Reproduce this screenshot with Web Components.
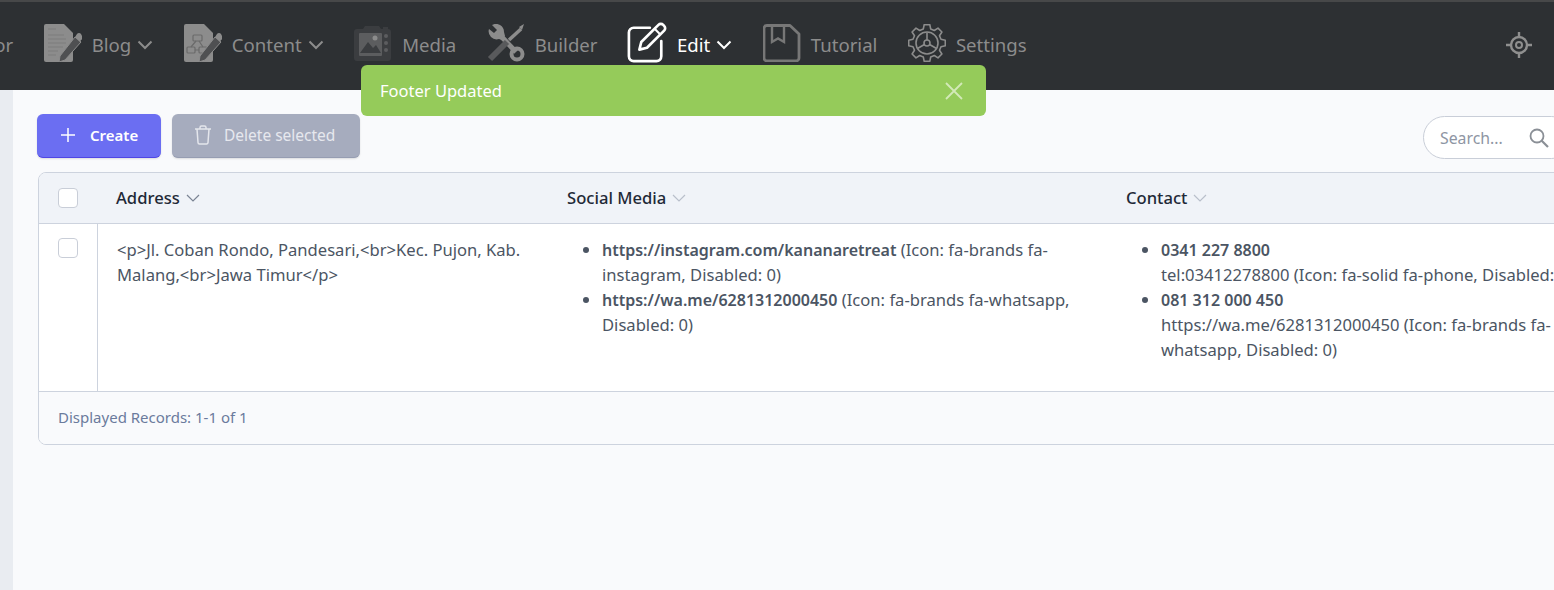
<!DOCTYPE html>
<html>
<head>
<meta charset="utf-8">
<title>Footer</title>
<style>
  html, body { margin: 0; height: 100%; overflow: hidden; background: #f9fafc; }
  body { font-family: "Noto Sans", "Open Sans", sans-serif; }
</style>
</head>
<body>

<app-shell>
  <nav-bar slot="nav">
    <nav-item label="Editor" clipped></nav-item>
    <nav-item label="Blog" caret>
      <svg slot="icon" width="38" height="38" viewBox="0 0 38 38">
        <path d="M2 0H20L29 9V36a2 2 0 0 1-2 2H2a2 2 0 0 1-2-2V2a2 2 0 0 1 2-2Z" fill="#8c8c8c"/>
        <path d="M4 5h8M4 11h16M4 15h18M4 19h18M4 23h15M4 27h10M4 31h8" stroke="#7c7c7c" stroke-width="1.2"/>
        <path d="M16 32L31 13l6 5L21 36l-6 2Z" fill="#4f5052" stroke="#8c8c8c" stroke-width="1"/>
        <path d="M31 13l2-3a2.500 2.500 0 0 1 4 0l1 2a3 3 0 0 1-1 4l-1 2Z" fill="#8c8c8c"/>
      </svg>
    </nav-item>
    <nav-item label="Content" caret>
      <svg slot="icon" width="38" height="38" viewBox="0 0 38 38">
        <path d="M2 0H20L29 9V36a2 2 0 0 1-2 2H2a2 2 0 0 1-2-2V2a2 2 0 0 1 2-2Z" fill="#8c8c8c"/>
        <g fill="none" stroke="#6a6a6a" stroke-width="1.200">
          <rect x="9" y="11" width="9" height="6" rx="1"/><rect x="3" y="23" width="8" height="6" rx="1"/><rect x="15" y="23" width="8" height="6" rx="1"/>
          <path d="M12 17l-5 6M15 17l4 6M11 26h4"/>
        </g>
        <path d="M16 32L31 13l6 5L21 36l-6 2Z" fill="#4f5052" stroke="#8c8c8c" stroke-width="1"/>
        <path d="M31 13l2-3a2.500 2.500 0 0 1 4 0l1 2a3 3 0 0 1-1 4l-1 2Z" fill="#8c8c8c"/>
      </svg>
    </nav-item>
    <nav-item label="Media">
      <svg slot="icon" width="38" height="38" viewBox="0 0 38 38">
        <path d="M3 5H9l2-3h14l2 3h2V3h5v2a3 3 0 0 1 3 3V34a3 3 0 0 1-3 3H3a3 3 0 0 1-3-3V8a3 3 0 0 1 3-3Z" fill="#3b3d40"/>
        <rect x="5" y="9" width="23" height="23" rx="1" fill="#5c5d5f"/>
        <path d="M6 29L14 18l5 6 3-3 5 8Z" fill="#3b3d40"/>
        <circle cx="21" cy="14" r="2.500" fill="#8c8c8c"/>
        <circle cx="32" cy="12" r="2" fill="#5c5d5f"/><circle cx="32" cy="19" r="2" fill="#5c5d5f"/><circle cx="32" cy="26" r="2" fill="#5c5d5f"/>
      </svg>
    </nav-item>
    <nav-item label="Builder">
      <svg slot="icon" width="38" height="38" viewBox="0 0 38 38">
        <path d="M12 10L29 28" stroke="#8c8c8c" stroke-width="5"/>
        <path d="M5 1l5 5-3 3-5-4a8 8 0 0 0 10 10l3 1 3-4-1-4A8 8 0 0 0 5 1Z" fill="#8c8c8c"/>
        <circle cx="30" cy="30" r="5.500" fill="none" stroke="#8c8c8c" stroke-width="4"/>
        <path d="M22 16L34 5" stroke="#8c8c8c" stroke-width="3.500"/>
        <path d="M32 3l5-3-2 6Z" fill="#8c8c8c"/>
        <path d="M3 35L20 18" stroke="#595a5c" stroke-width="6"/>
      </svg>
    </nav-item>
    <nav-item label="Edit" caret active>
      <svg slot="icon" width="40" height="42" viewBox="0 0 42 44">
        <path d="M24 6H7a5 5 0 0 0-5 5V36a5 5 0 0 0 5 5H31a5 5 0 0 0 5-5V20" fill="none" stroke="#fff" stroke-width="2.800" stroke-linecap="round"/>
        <path d="M13 29l2-8L33 3a3.500 3.500 0 0 1 5 0l1 1a3.500 3.500 0 0 1 0 5L21 27Z" fill="none" stroke="#fff" stroke-width="2.800" stroke-linejoin="round"/>
        <path d="M29 7l6 6" stroke="#fff" stroke-width="2.200"/>
      </svg>
    </nav-item>
    <nav-item label="Tutorial">
      <svg slot="icon" width="38" height="38" viewBox="0 0 38 38">
        <path d="M4 1.500H27L36 10V34a3 3 0 0 1-3 3H4a3 3 0 0 1-3-3V4a3 3 0 0 1 3-2.500Z" fill="none" stroke="#777" stroke-width="2.800" stroke-linejoin="round"/>
        <path d="M9 2V18l6-3.500L21 18V2" fill="none" stroke="#777" stroke-width="2.400"/>
      </svg>
    </nav-item>
    <nav-item label="Settings">
      <gear-icon slot="icon"></gear-icon>
    </nav-item>
    <svg class="target" slot="end" width="26" height="26" viewBox="0 0 26 26" fill="none" stroke="#8f8f8f">
      <circle cx="13" cy="13" r="8" stroke-width="2.400"/>
      <circle cx="13" cy="13" r="3" stroke-width="2"/>
      <path d="M13 0v5M13 21v5M0 13h5M21 13h5" stroke-width="2.400"/>
    </svg>
  </nav-bar>

  <toolbar-row>
    <ui-button variant="primary">
      <svg slot="icon" width="16" height="16" viewBox="0 0 16 16"><path d="M8 1v14M1 8h14" stroke="#fff" stroke-width="1.500"/></svg>
      Create
    </ui-button>
    <ui-button variant="muted">
      <svg slot="icon" width="18" height="20" viewBox="0 0 18 20" fill="none" stroke="#e4e6ec" stroke-width="1.500"><path d="M1 4h16M6 4V2.500A1.500 1.500 0 0 1 7.500 1h3A1.500 1.500 0 0 1 12 2.500V4M3 4l1 13.500A1.500 1.500 0 0 0 5.500 19h7a1.500 1.500 0 0 0 1.500-1.500L15 4"/></svg>
      Delete selected
    </ui-button>
    <search-box slot="end"></search-box>
  </toolbar-row>

  <data-table>
    <head-cell first><ui-check></ui-check></head-cell>
    <head-cell sort="#7b8494" tight>Address</head-cell>
    <head-cell sort="#b9bfcb">Social Media</head-cell>
    <head-cell sort="#b9bfcb">Contact</head-cell>

    <body-cell first><ui-check></ui-check></body-cell>
    <body-cell>&lt;p&gt;Jl. Coban Rondo, Pandesari,&lt;br&gt;Kec. Pujon, Kab. Malang,&lt;br&gt;Jawa Timur&lt;/p&gt;</body-cell>
    <body-cell>
      <link-list>
        <li-row><b>https://instagram.com/kananaretreat</b> (Icon: fa-brands fa-instagram, Disabled: 0)</li-row>
        <li-row><b>https://wa.me/6281312000450</b> (Icon: fa-brands fa-whatsapp, Disabled: 0)</li-row>
      </link-list>
    </body-cell>
    <body-cell>
      <link-list>
        <li-row><b>0341 227 8800</b><br>tel:03412278800 (Icon: fa-solid fa-phone, Disabled: 0)</li-row>
        <li-row><b>081 312 000 450</b><br>https://wa.me/6281312000450 (Icon: fa-brands fa-whatsapp, Disabled: 0)</li-row>
      </link-list>
    </body-cell>

    <table-foot>Displayed Records: 1-1 of 1</table-foot>
  </data-table>

  <toast-message slot="overlay">Footer Updated</toast-message>
</app-shell>

<script>
  // small helper, every element here is just a style + some markup
  class Base extends HTMLElement {
    constructor() {
      super()
      this.attachShadow({ mode: 'open' }).innerHTML = this.constructor.markup
    }
  }

  class AppShell extends Base {
    static markup = `
      <style>
        :host { display: flex; flex-direction: column; position: relative; height: 590px; overflow: hidden; }
        .page { flex: 1; display: flex; min-height: 0; }
        .strip { width: 13px; flex: none; background: #e9ecf1; }
        main { flex: none; width: 1700px; padding: 24px 0 0 24px; box-sizing: border-box; background: #f9fafc; }
      </style>
      <slot name="nav"></slot>
      <div class="page">
        <div class="strip"></div>
        <main><slot></slot></main>
      </div>
      <slot name="overlay"></slot>`
  }

  class NavBar extends Base {
    static markup = `
      <style>
        :host { display: flex; align-items: center; flex: none; box-sizing: border-box; height: 90px; padding-bottom: 3px;
                gap: 30.500px; margin-left: -49px; background: #2d3033; border-top: 2px solid #474849; }
        .end { display: flex; width: 26px; position: absolute; right: 22px; top: 32px; }
      </style>
      <slot></slot>
      <div class="end"><slot name="end"></slot></div>`
  }

  class NavItem extends Base {
    static markup = `
      <style>
        :host { display: inline-flex; align-items: center; height: 44px; color: #8c8c8c; font-size: 18.600px; line-height: 26px; }
        :host([active]) { color: #fff; margin-left: -1px; }
        .ico { display: flex; margin-right: 10px; margin-bottom: 4px; }
        .caret { margin-left: 6px; }
      </style>
      <span class="ico"><slot name="icon"></slot></span>
      <span class="lab"></span>`

    connectedCallback() {
      this.shadowRoot.querySelector('.lab').textContent = this.getAttribute('label')
      if (this.hasAttribute('caret') && !this.shadowRoot.querySelector('.caret')) {
        const col = this.hasAttribute('active') ? '#fff' : '#8c8c8c'
        this.shadowRoot.querySelector('.lab').insertAdjacentHTML('afterend',
          `<svg class="caret" width="16" height="10" viewBox="0 0 16 10"><path d="M1.500 1.500L8 8l6.500-6.500" fill="none" stroke="${col}" stroke-width="2"/></svg>`)
      }
    }
  }

  class GearIcon extends Base {
    static markup = `<style>:host { display: flex; width: 38px; height: 38px; }</style>
      <svg width="38" height="38" viewBox="0 0 38 38" fill="none" stroke="#8c8c8c" stroke-width="1.600" stroke-linejoin="round"></svg>`

    connectedCallback() {
      let d = ''
      const teeth = 8
      for (let i = 0; i < teeth; i++) {
        const a = i * Math.PI * 2 / teeth
        const pts = [[-0.26, 14.5], [-0.15, 18.5], [0.15, 18.5], [0.26, 14.5]]
        pts.forEach(([o, r]) => {
          const x = 19 + r * Math.sin(a + o), y = 19 - r * Math.cos(a + o)
          d += (d ? 'L' : 'M') + x.toFixed(1) + ' ' + y.toFixed(1)
        })
      }
      this.shadowRoot.querySelector('svg').innerHTML = `<path d="${d}Z"/>
        <circle cx="19" cy="19" r="11"/>
        <circle cx="19" cy="19" r="3"/>
        <path d="M19 16V8.500M16.400 20.500L9.900 24.300M21.600 20.500L28.100 24.300"/>`
    }
  }

  class ToolbarRow extends Base {
    static markup = `
      <style>
        :host { display: flex; align-items: center; height: 44px; gap: 11px; width: 1536px; }
        .end { margin-left: auto; }
      </style>
      <slot></slot>
      <div class="end"><slot name="end"></slot></div>`
  }

  class UiButton extends Base {
    static markup = `
      <style>
        :host { display: inline-flex; align-items: center; box-sizing: border-box; height: 44px; padding-bottom: 2px; border-radius: 6px;
                font-size: 15.500px; box-shadow: 0 1px 2px rgba(0,0,0,.12); }
        :host([variant=primary]) { width: 124px; padding-left: 23px; gap: 14px; background: #6b6ef2; color: #fff;
                font-size: 15px; font-weight: 600; border-bottom: 1px solid #4f46e5; }
        :host([variant=muted]) { width: 188px; padding-left: 22px; gap: 12px; background: #a6acbe; color: #e6e8ee;
                border-bottom: 1px solid #969db2; }
        span { display: flex; }
      </style>
      <span><slot name="icon"></slot></span><slot></slot>`
  }

  class SearchBox extends Base {
    static markup = `
      <style>
        :host { display: flex; align-items: center; box-sizing: border-box; width: 150px; height: 43px; margin-top: 3px; padding-left: 16px;
                background: #fff; border: 1px solid #c9ced8; border-radius: 22px; color: #8e95a3; font-size: 15.800px; }
        svg { margin-left: 26px; }
      </style>
      <span>Search...</span>
      <svg width="20" height="20" viewBox="0 0 20 20" fill="none" stroke="#8a8f96" stroke-width="1.800"><circle cx="8" cy="8" r="6.500"/><path d="M12.500 12.500L19 19" stroke-width="2.200"/></svg>`
  }

  class DataTable extends Base {
    static markup = `
      <style>
        :host { display: grid; grid-template-columns: 59px 450px 559px 1fr; width: 1560px; margin-top: 14px; margin-left: 1px;
                background: #fff; border: 1px solid #cdd3de; border-radius: 8px; overflow: hidden;
                font-size: 16.600px; line-height: 25.200px; color: #4b5563; }
      </style>
      <slot></slot>`
  }

  class HeadCell extends Base {
    static markup = `
      <style>
        :host { display: flex; align-items: center; gap: 6px; height: 51px; box-sizing: border-box; padding-left: 19px;
                background: #f0f3f8; border-bottom: 1px solid #cdd3de; color: #1f2937; font-weight: 500; font-size: 16.600px; }
        :host([tight]) { padding-left: 18px; }
      </style>
      <slot></slot>`

    connectedCallback() {
      const sort = this.getAttribute('sort')
      if (sort && !this.shadowRoot.querySelector('svg')) {
        this.shadowRoot.querySelector('slot').insertAdjacentHTML('afterend',
          `<svg width="14" height="8" viewBox="0 0 14 8"><path d="M1 1l6 6 6-6" fill="none" stroke="${sort}" stroke-width="1.200"/></svg>`)
      }
    }
  }

  class BodyCell extends Base {
    static markup = `
      <style>
        :host { display: block; height: 167px; box-sizing: border-box; padding: 12.500px 19px 0; }
        :host([first]) { border-right: 1px solid #cdd3de; padding-top: 14px; }
      </style>
      <slot></slot>`
  }

  class LinkList extends Base {
    static markup = `<style>:host { display: block; padding-left: 35px; }</style><slot></slot>`
  }

  class LiRow extends Base {
    static markup = `
      <style>
        :host { display: list-item; list-style: disc; }
        ::slotted(b) { font-weight: 600; font-size: 16px; line-height: 1; }
      </style>
      <slot></slot>`
  }

  class TableFoot extends Base {
    static markup = `
      <style>
        :host { grid-column: 1 / -1; display: flex; align-items: center; height: 53px; box-sizing: border-box; padding-left: 19px;
                background: #f9fafc; border-top: 1px solid #cdd3de; font-size: 15px; color: #6b7b9c; }
      </style>
      <slot></slot>`
  }

  class UiCheck extends Base {
    static markup = `
      <style>
        :host { display: block; box-sizing: border-box; width: 20px; height: 20px; background: #fff;
                border: 1px solid #c9ced8; border-radius: 4px; }
      </style>`
  }

  class ToastMessage extends Base {
    static markup = `
      <style>
        :host { position: absolute; left: 361px; top: 65px; width: 625px; height: 51px; box-sizing: border-box; padding: 0 22px 0 19px;
                display: flex; align-items: center; justify-content: space-between; background: #95cb5a; border-radius: 6px;
                color: #fff; font-size: 16.500px; }
      </style>
      <slot></slot>
      <svg width="20" height="20" viewBox="0 0 20 20"><path d="M2 2l16 16M18 2L2 18" stroke="#d3e9b8" stroke-width="1.800"/></svg>`
  }

  customElements.define('app-shell', AppShell)
  customElements.define('nav-bar', NavBar)
  customElements.define('nav-item', NavItem)
  customElements.define('gear-icon', GearIcon)
  customElements.define('toolbar-row', ToolbarRow)
  customElements.define('ui-button', UiButton)
  customElements.define('search-box', SearchBox)
  customElements.define('data-table', DataTable)
  customElements.define('head-cell', HeadCell)
  customElements.define('body-cell', BodyCell)
  customElements.define('link-list', LinkList)
  customElements.define('li-row', LiRow)
  customElements.define('table-foot', TableFoot)
  customElements.define('ui-check', UiCheck)
  customElements.define('toast-message', ToastMessage)
</script>
</body>
</html>
